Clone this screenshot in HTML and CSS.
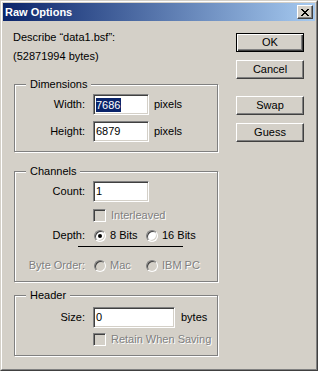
FILE: index.html
```html
<!DOCTYPE html>
<html>
<head>
<meta charset="utf-8">
<link rel="stylesheet" href="styles.css">
</head>
<body>
<div class="window">
  <div class="frame">
    <div class="titlebar">
      <span class="title">Raw Options</span>
      <div class="close">
        <svg width="8" height="7" viewBox="0 0 8 7" shape-rendering="crispEdges">
          <path fill="#000" d="M0 0h2v1H0zM6 0h2v1H6zM1 1h2v1H1zM5 1h2v1H5zM2 2h4v1H2zM3 3h2v1H3zM2 4h4v1H2zM1 5h2v1H1zM5 5h2v1H5zM0 6h2v1H0zM6 6h2v1H6z"/>
        </svg>
      </div>
    </div>
    <div class="content">
      <div class="main">
        <div class="line">Describe “data1.bsf”:</div>
        <div class="line second">(52871994 bytes)</div>

        <div class="group dims">
          <span class="legend">Dimensions</span>
          <div class="row">
            <span class="lbl">Width:</span>
            <div class="field w56"><span class="sel">7686</span></div>
            <span class="unit">pixels</span>
          </div>
          <div class="row gap6">
            <span class="lbl">Height:</span>
            <div class="field w56">6879</div>
            <span class="unit">pixels</span>
          </div>
        </div>

        <div class="group channels">
          <span class="legend">Channels</span>
          <div class="row">
            <span class="lbl">Count:</span>
            <div class="field w56">1</div>
          </div>
          <div class="row chkrow ilv">
            <span class="chk"></span>
            <span class="dis chktext">Interleaved</span>
          </div>
          <div class="row optrow depth">
            <span class="lbl">Depth:</span>
            <span class="opt"><span class="radio on"></span><span>8 Bits</span></span>
            <span class="opt last"><span class="radio"></span><span>16 Bits</span></span>
          </div>
          <div class="rule"></div>
          <div class="row optrow order">
            <span class="lbl dis">Byte Order:</span>
            <span class="opt"><span class="radio off"></span><span class="dis">Mac</span></span>
            <span class="opt last"><span class="radio off"></span><span class="dis">IBM PC</span></span>
          </div>
        </div>

        <div class="group header">
          <span class="legend">Header</span>
          <div class="row">
            <span class="lbl">Size:</span>
            <div class="field w82">0</div>
            <span class="unit u6">bytes</span>
          </div>
          <div class="row chkrow retain">
            <span class="chk"></span>
            <span class="dis chktext">Retain When Saving</span>
          </div>
        </div>
      </div>

      <div class="buttons">
        <div class="btn default">OK</div>
        <div class="btn">Cancel</div>
        <div class="btn swap">Swap</div>
        <div class="btn">Guess</div>
      </div>
    </div>
  </div>
</div>
</body>
</html>
```

FILE: styles.css
```css
html, body {
  margin: 0;
  padding: 0;
  background: #d4d0c8;
}

body {
  font-family: "Liberation Sans", Arial, sans-serif;
  font-size: 11px;
  line-height: 13px;
  color: #000;
}

.window {
  width: 318px;
  height: 371px;
  box-sizing: border-box;
  border: 1px solid;
  border-color: #d4d0c8 #404040 #404040 #d4d0c8;
  background: #d4d0c8;
}

.frame {
  height: 100%;
  box-sizing: border-box;
  border: 1px solid;
  border-color: #fff #808080 #808080 #fff;
  padding: 1px;
  display: flex;
  flex-direction: column;
}

.titlebar {
  height: 18px;
  flex: none;
  background: linear-gradient(to right, #0a246a, #a6caf0);
  display: flex;
  align-items: center;
  justify-content: space-between;
  padding: 0 2px;
  color: #fff;
}

.title {
  font-weight: bold;
  font-size: 11px;
}

.close {
  width: 16px;
  height: 14px;
  box-sizing: border-box;
  border: 1px solid;
  border-color: #fff #404040 #404040 #fff;
  box-shadow: inset -1px -1px #808080;
  background: #d4d0c8;
  display: flex;
  align-items: center;
  justify-content: center;
}

.close svg {
  display: block;
  margin-left: -1px;
}

.content {
  display: grid;
  grid-template-columns: 215px 68px;
  column-gap: 8px;
  padding-left: 10px;
}

.main {
  padding-top: 10px;
}

.line {
  height: 13px;
  white-space: nowrap;
}

.line.second {
  margin-top: 6px;
}

.group {
  position: relative;
  width: 204px;
  box-sizing: border-box;
  border: 1px solid #808080;
  box-shadow: inset 1px 1px #fff, 1px 1px #fff;
  margin-left: 1px;
}

.legend {
  position: absolute;
  top: -7px;
  left: 11px;
  padding: 0 4px;
  background: #d4d0c8;
  line-height: 13px;
}

.dims {
  margin-top: 21px;
  padding: 9px 0 9px;
}

.channels {
  margin-top: 19px;
  padding: 9px 0 8px;
}

.header {
  margin-top: 13px;
  padding: 11px 0 9px;
}

.row {
  display: flex;
  align-items: center;
  white-space: nowrap;
}

.gap6 {
  margin-top: 6px;
}

.lbl {
  width: 70px;
  text-align: right;
  margin-right: 8px;
  flex: none;
}

.field {
  height: 21px;
  box-sizing: border-box;
  border: 1px solid;
  border-color: #808080 #fff #fff #808080;
  box-shadow: inset 1px 1px #404040, inset -1px -1px #d4d0c8;
  background: #fff;
  padding: 0 1px 0 2px;
  display: flex;
  align-items: center;
  flex: none;
}

.w56 { width: 56px; }
.w82 { width: 82px; }

.sel {
  background: #0a246a;
  color: #fff;
  line-height: 14px;
  padding-right: 1px;
}

.unit {
  margin-left: 5px;
}

.unit.u6 {
  margin-left: 6px;
}

.dis {
  color: #808080;
  text-shadow: 1px 1px 0 #fff;
}

.chkrow {
  height: 13px;
  padding-left: 78px;
}

.ilv {
  margin-top: 7px;
}

.retain {
  margin-top: 5px;
}

.chk {
  width: 13px;
  height: 13px;
  box-sizing: border-box;
  border: 1px solid;
  border-color: #808080 #fff #fff #808080;
  box-shadow: inset 1px 1px #404040, inset -1px -1px #d4d0c8;
  background: #d4d0c8;
  flex: none;
}

.chktext {
  margin-left: 5px;
}

.optrow {
  height: 15px;
}

.depth {
  margin-top: 6px;
}

.order {
  margin-top: 11px;
}

.rule {
  margin: 3px 0 0 63px;
  width: 105px;
  height: 1px;
  background: #000;
}

.opt {
  display: flex;
  align-items: center;
  width: 52px;
  flex: none;
  white-space: nowrap;
}

.opt.last {
  width: auto;
}

.radio {
  width: 12px;
  height: 12px;
  box-sizing: border-box;
  border-radius: 50%;
  border: 1px solid;
  border-color: #808080 #fff #fff #808080;
  box-shadow: inset 1px 1px #404040, inset -1px -1px #d4d0c8;
  background: #fff;
  margin-left: 1px;
  margin-right: 4px;
  display: flex;
  align-items: center;
  justify-content: center;
  flex: none;
}

.radio.on::after {
  content: "";
  width: 4px;
  height: 4px;
  border-radius: 50%;
  background: #000;
}

.radio.off {
  background: #d4d0c8;
}

.buttons {
  padding-top: 12px;
  display: flex;
  flex-direction: column;
  gap: 8px;
}

.btn {
  width: 68px;
  height: 19px;
  box-sizing: border-box;
  border: 1px solid;
  border-color: #fff #404040 #404040 #fff;
  box-shadow: inset -1px -1px #808080;
  background: #d4d0c8;
  display: flex;
  align-items: center;
  justify-content: center;
}

.btn.default {
  border: 1px solid #000;
  box-shadow: inset 1px 1px #fff, inset -1px -1px #404040, inset -2px -2px #808080;
}

.btn.swap {
  margin-top: 9px;
}
```
